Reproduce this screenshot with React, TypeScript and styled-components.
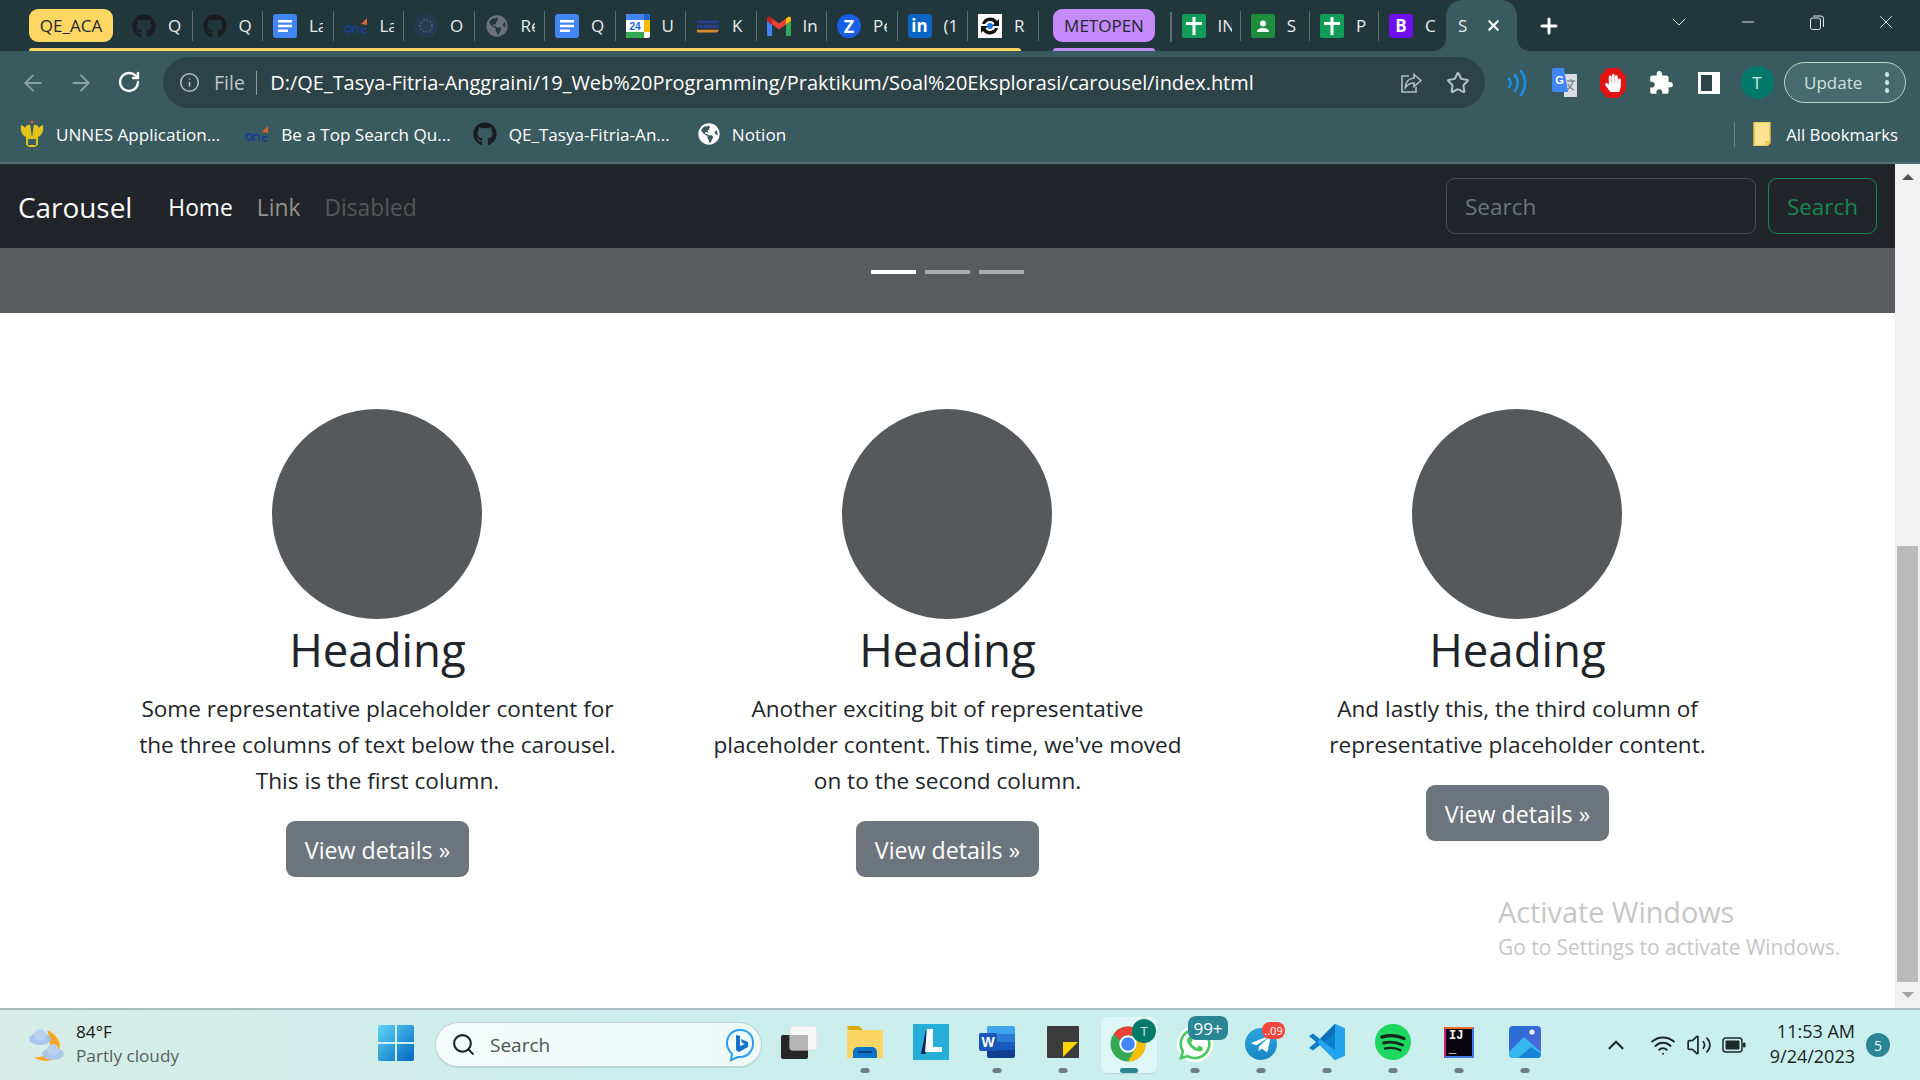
import React from "react";
import styled, { createGlobalStyle } from "styled-components";
import { FaGithub, FaGlobeAmericas, FaHandPaper, FaTelegramPlane, FaWhatsapp } from "react-icons/fa";
import { ArrowLeft, ArrowRight, ChevronDown, ChevronUp, Info, Minus, Plus, RotateCw, Search as SearchGlyph, Star, Volume2, Wifi, X } from "lucide-react";

const FONT = `"Open Sans", "Noto Sans", sans-serif`;

const Global = createGlobalStyle`
  html, body { margin: 0; padding: 0; background: #fff; }
  body { font-family: ${FONT}; overflow: hidden; }
  * { box-sizing: border-box; }
`;

const Page = styled.div`
  width: 1920px;
  height: 1080px;
  display: flex;
  flex-direction: column;
  overflow: hidden;
`;

/* ---------- tab strip ---------- */
const TabStrip = styled.div`
  height: 51px;
  flex: none;
  background: #22373b;
  display: flex;
  padding-left: 29px;
  color: #fff;
`;
const Group = styled.div<{ $gap?: number }>`
  display: flex;
  flex-direction: column;
  margin-left: ${(p) => p.$gap ?? 0}px;
`;
const GroupRow = styled.div`
  height: 48px;
  display: flex;
  align-items: center;
  padding-top: 3px;
`;
const GroupLine = styled.div<{ $w: number; $c: string }>`
  height: 3px;
  width: ${(p) => p.$w}px;
  background: ${(p) => p.$c};
  border-radius: 3px 3px 0 0;
`;
const Chip = styled.div<{ $c: string; $w: number; $after: number }>`
  width: ${(p) => p.$w}px;
  height: 33px;
  flex: none;
  border-radius: 9px;
  background: ${(p) => p.$c};
  color: #22282c;
  font-size: 17px;
  display: flex;
  align-items: center;
  justify-content: center;
  margin-right: ${(p) => p.$after}px;
`;
const Tab = styled.div<{ $w: number; $last?: boolean }>`
  width: ${(p) => p.$w}px;
  height: 30px;
  flex: none;
  display: flex;
  align-items: center;
  padding-left: 10px;
  gap: 12px;
  border-right: ${(p) => (p.$last ? "none" : "1.5px solid #5b6f73")};
`;
const TabIcon = styled.span`
  width: 24px;
  height: 24px;
  flex: none;
  display: flex;
  align-items: center;
  justify-content: center;
`;
const TabLabel = styled.span`
  width: 14px;
  overflow: hidden;
  white-space: nowrap;
  font-size: 17px;
  color: #e8ecec;
`;
const LeadSep = styled.div`
  width: 1.5px;
  height: 30px;
  margin: 12px 0 0 15px;
  background: #5b6f73;
  flex: none;
`;
const SecondTabs = styled.div`
  display: flex;
  height: 48px;
  align-items: center;
  padding-top: 3px;
`;
const ActiveTab = styled.div`
  position: relative;
  width: 71px;
  height: 51px;
  flex: none;
  background: #395a5f;
  border-radius: 16px 16px 0 0;
  display: flex;
  align-items: center;
  padding-left: 12px;
  gap: 18px;
  font-size: 17px;
  color: #e8ecec;
  &::before,
  &::after {
    content: "";
    position: absolute;
    bottom: 0;
    width: 12px;
    height: 12px;
  }
  &::before {
    left: -12px;
    background: radial-gradient(circle at 0 0, #22373b 11.5px, #395a5f 12px);
  }
  &::after {
    right: -12px;
    background: radial-gradient(circle at 100% 0, #22373b 11.5px, #395a5f 12px);
  }
`;
const NewTab = styled.div`
  width: 64px;
  padding-left: 20px;
  display: flex;
  align-items: center;
`;
const WindowControls = styled.div`
  margin-left: auto;
  display: flex;
  height: 44px;
`;
const WindowButton = styled.div`
  width: 69px;
  display: flex;
  align-items: center;
  justify-content: center;
  color: #e4eaea;
`;

/* ---------- toolbar ---------- */
const Toolbar = styled.div`
  height: 57px;
  flex: none;
  background: #395a5f;
  padding-top: 6px;
  display: flex;
  align-items: center;
`;
const NavRow = styled.div`
  display: flex;
  padding-left: 9px;
  margin-right: 10px;
`;
const NavButton = styled.div<{ $dim?: boolean }>`
  width: 48px;
  display: flex;
  justify-content: center;
  color: ${(p) => (p.$dim ? "#8ba0a3" : "#ffffff")};
`;
const Omnibox = styled.div`
  width: 1322px;
  height: 51px;
  flex: none;
  border-radius: 26px;
  background: #2e4347;
  padding: 0 4px 0 16px;
  display: flex;
  align-items: center;
`;
const OmniFile = styled.span`
  font-size: 19.5px;
  color: #bdc8ca;
  margin-left: 14px;
`;
const OmniSep = styled.span`
  width: 1.5px;
  height: 24px;
  background: #8b9b9e;
  margin: 0 13px 0 11px;
`;
const OmniUrl = styled.span`
  font-size: 19.93px;
  color: #fff;
  white-space: nowrap;
`;
const OmniEnd = styled.div`
  margin-left: auto;
  display: flex;
`;
const OmniAction = styled.div`
  width: 47px;
  display: flex;
  justify-content: center;
  color: #b3bfc1;
`;
const Actions = styled.div`
  display: flex;
  margin-left: 8px;
`;
const ActionSlot = styled.div`
  width: 48px;
  height: 40px;
  display: flex;
  align-items: center;
  justify-content: center;
`;
const Avatar = styled.div<{ $size: number; $font: number }>`
  width: ${(p) => p.$size}px;
  height: ${(p) => p.$size}px;
  border-radius: 50%;
  background: #00796b;
  color: #cfe9e4;
  font-size: ${(p) => p.$font}px;
  display: flex;
  align-items: center;
  justify-content: center;
`;
const UpdateButton = styled.div`
  width: 122px;
  height: 41px;
  margin-left: 3px;
  border: 1.5px solid #bcd6c8;
  border-radius: 21px;
  background: #476a6e;
  display: flex;
  align-items: center;
  padding-left: 19px;
  color: #cfe3df;
  font-size: 17px;
`;
const Kebab = styled.div`
  margin-left: auto;
  margin-right: 16px;
  display: flex;
  flex-direction: column;
  gap: 3.5px;
`;
const KebabDot = styled.span`
  width: 4.5px;
  height: 4.5px;
  border-radius: 50%;
  background: #cfe3df;
`;

/* ---------- bookmarks ---------- */
const BookmarkBar = styled.div`
  height: 56px;
  flex: none;
  background: #395a5f;
  border-bottom: 2px solid #4f7277;
  display: flex;
  align-items: center;
  padding: 0 22px 2px 20px;
`;
const Bookmark = styled.div<{ $after: number }>`
  display: flex;
  align-items: center;
  gap: 12px;
  color: #fff;
  font-size: 17.1px;
  white-space: nowrap;
  margin-right: ${(p) => p.$after}px;
`;
const BookmarkEnd = styled.div`
  margin-left: auto;
  display: flex;
  align-items: center;
  gap: 15px;
  color: #fff;
  font-size: 16.8px;
`;
const BookmarkSep = styled.span`
  width: 1.5px;
  height: 25px;
  background: #68858a;
  margin-right: 3px;
`;

/* ---------- page ---------- */
const Viewport = styled.div`
  height: 844px;
  flex: none;
  display: flex;
`;
const Main = styled.div`
  position: relative;
  flex: 1;
  min-width: 0;
  display: flex;
  flex-direction: column;
  background: #fff;
`;
const Navbar = styled.nav`
  height: 84px;
  flex: none;
  background: #212529;
  display: flex;
  align-items: center;
  padding: 0 18px;
`;
const Brand = styled.a`
  font-size: 27.9px;
  color: #fff;
  margin-right: 36px;
  padding-top: 2px;
`;
const NavLink = styled.a<{ $tone: string }>`
  font-size: 22.8px;
  color: ${(p) => p.$tone};
  margin-right: 24px;
  padding-top: 2px;
`;
const SearchForm = styled.form`
  margin-left: auto;
  display: flex;
  gap: 12px;
`;
const SearchInput = styled.div`
  width: 310px;
  height: 56px;
  border: 1.5px solid #4b4f53;
  border-radius: 9px;
  padding-left: 18px;
  display: flex;
  align-items: center;
  color: #6c757d;
  font-size: 22.5px;
`;
const SearchButton = styled.div`
  width: 109px;
  height: 56px;
  border: 1.5px solid #198754;
  border-radius: 9px;
  display: flex;
  align-items: center;
  justify-content: center;
  color: #198754;
  font-size: 22.5px;
`;
const CarouselEnd = styled.div`
  height: 65px;
  flex: none;
  background: #595c5f;
  display: flex;
  justify-content: center;
  gap: 9px;
  padding-top: 22px;
`;
const Indicator = styled.span<{ $on?: boolean }>`
  width: 45px;
  height: 4px;
  background: ${(p) => (p.$on ? "#ffffff" : "#a9abad")};
`;
const Marketing = styled.div`
  width: 1710px;
  margin: 96px auto 0;
  display: grid;
  grid-template-columns: repeat(3, 570px);
  text-align: center;
  color: #212529;
`;
const Column = styled.div`
  display: flex;
  flex-direction: column;
  align-items: center;
`;
const Circle = styled.div`
  width: 210px;
  height: 210px;
  margin-right: 2px;
  border-radius: 50%;
  background: #55595c;
`;
const Heading = styled.h2`
  margin: 1px 0 13px;
  font-size: 45.6px;
  font-weight: 400;
  line-height: 58px;
`;
const Body = styled.p`
  margin: 0 0 22px;
  font-size: 22.6px;
  line-height: 36px;
  white-space: pre-line;
`;
const DetailButton = styled.a`
  width: 183px;
  height: 56px;
  border-radius: 9px;
  background: #6c757d;
  color: #fff;
  font-size: 23.2px;
  padding-top: 2px;
  display: flex;
  align-items: center;
  justify-content: center;
`;
const Activate = styled.div`
  position: absolute;
  left: 1498px;
  top: 729px;
  color: #c6c6c6;
  white-space: nowrap;
`;
const ActivateTitle = styled.div`
  font-size: 28.8px;
  line-height: 38px;
`;
const ActivateHint = styled.div`
  font-size: 20.9px;
  line-height: 32px;
`;
const Scrollbar = styled.div`
  width: 25px;
  flex: none;
  background: #f1f1f1;
  display: flex;
  flex-direction: column;
  align-items: center;
  justify-content: space-between;
  padding: 10px 0;
`;
const ScrollTrack = styled.div`
  flex: 1;
  width: 100%;
  display: flex;
  flex-direction: column;
  justify-content: flex-end;
  align-items: center;
  padding-bottom: 10px;
`;
const ScrollThumb = styled.div`
  width: 21px;
  height: 436px;
  background: #bababa;
`;
const ArrowUp = styled.span`
  width: 0;
  height: 0;
  border-left: 6px solid transparent;
  border-right: 6px solid transparent;
  border-bottom: 6px solid #505050;
`;
const ArrowDown = styled.span`
  width: 0;
  height: 0;
  border-left: 6px solid transparent;
  border-right: 6px solid transparent;
  border-top: 6px solid #a3a3a3;
`;

/* ---------- taskbar ---------- */
const Taskbar = styled.div`
  height: 72px;
  flex: none;
  border-top: 2px solid #a9bfbf;
  background: linear-gradient(90deg, #d7ece6 0%, #cbeeec 35%, #c9efee 100%);
  display: flex;
  align-items: center;
`;
const Weather = styled.div`
  width: 378px;
  flex: none;
  padding-left: 27px;
  display: flex;
  align-items: center;
  gap: 11px;
`;
const WeatherText = styled.div`
  display: flex;
  flex-direction: column;
  font-size: 17.2px;
  line-height: 24px;
  margin-bottom: 3px;
`;
const WeatherTemp = styled.span`
  color: #1a1a1a;
`;
const WeatherState = styled.span`
  color: #55605f;
`;
const StartButton = styled.div`
  width: 57px;
  flex: none;
`;
const SearchPill = styled.div`
  width: 327px;
  height: 46px;
  flex: none;
  border-radius: 23px;
  border: 1.5px solid #bcd6d4;
  border-bottom-width: 2.5px;
  background: linear-gradient(90deg, #f4fbfa, #ecf9f7);
  display: flex;
  align-items: center;
  padding: 0 6px 0 15px;
  gap: 14px;
  color: #4b5452;
  font-size: 19px;
`;
const PillEnd = styled.span`
  margin-left: auto;
  display: flex;
`;
const Slots = styled.div`
  display: flex;
  margin-left: 4px;
`;
const Slot = styled.div<{ $active?: boolean }>`
  position: relative;
  width: 66px;
  height: 56px;
  flex: none;
  display: flex;
  align-items: center;
  justify-content: center;
  padding-bottom: 6px;
  &::before {
    content: "";
    display: ${(p) => (p.$active ? "block" : "none")};
    position: absolute;
    inset: 0 5px;
    border-radius: 6px;
    background: #dff6f6;
    box-shadow: 0 1px 1px #b9d8d8;
  }
`;
const SlotContent = styled.span`
  position: relative;
  display: flex;
`;
const Dot = styled.span<{ $active?: boolean }>`
  position: absolute;
  bottom: 0;
  left: 50%;
  transform: translateX(-50%);
  width: ${(p) => (p.$active ? 18 : 9)}px;
  height: 5px;
  border-radius: 3px;
  background: ${(p) => (p.$active ? "#2a8595" : "#6d7f80")};
`;
const Badge = styled.span<{ $bg: string; $w: number; $r: number; $t: number; $h: number; $fs: number }>`
  position: absolute;
  right: ${(p) => p.$r}px;
  top: ${(p) => p.$t}px;
  width: ${(p) => p.$w}px;
  height: ${(p) => p.$h}px;
  border-radius: 8px;
  background: ${(p) => p.$bg};
  color: #fff;
  font-size: ${(p) => p.$fs}px;
  display: flex;
  align-items: center;
  justify-content: center;
`;
const AvatarBadge = styled.span`
  position: absolute;
  top: -3px;
  right: -5px;
`;
const IdeBox = styled.span`
  width: 30px;
  height: 31px;
  background: #0b0510;
  border: 2px solid #3a78e6;
  border-left-color: #d81b78;
  border-top-color: #ef6c2a;
  color: #fff;
  font: 700 12px "Liberation Mono", monospace;
  padding: 1px 0 0 3px;
  display: block;
  line-height: 13px;
`;
const Tray = styled.div`
  margin-left: 38px;
  width: 40px;
  display: flex;
  justify-content: center;
  color: #1d2a2a;
`;
const TrayIcons = styled.div`
  display: flex;
  align-items: center;
  gap: 10px;
  margin-left: 14px;
  color: #1d2a2a;
`;
const Clock = styled.div`
  width: 109px;
  text-align: right;
  font-size: 18px;
  line-height: 25px;
  color: #1a1f1f;
  margin-bottom: 3px;
`;
const Notice = styled.div`
  width: 24px;
  height: 24px;
  margin-left: 11px;
  border-radius: 50%;
  background: #2a8595;
  color: #fff;
  font-size: 14px;
  display: flex;
  align-items: center;
  justify-content: center;
`;
const MiniSquare = styled.span<{ $bg: string; $c: string; $fs: number }>`
  width: 24px;
  height: 24px;
  border-radius: 4px;
  background: ${(p) => p.$bg};
  color: ${(p) => p.$c};
  font-size: ${(p) => p.$fs}px;
  font-weight: 700;
  display: flex;
  align-items: center;
  justify-content: center;
`;
const ZoomDisc = styled(MiniSquare)`
  border-radius: 50%;
`;

/* ---------- icons ---------- */
const Docs = () => (
  <svg width="24" height="24" viewBox="0 0 24 24">
    <rect width="24" height="24" rx="3" fill="#4285f4" />
    <path d="M5 6h14v2.6H5zM5 10.7h14v2.6H5zM5 15.4h10v2.6H5z" fill="#fff" />
  </svg>
);
const Cross = () => (
  <svg width="24" height="24" viewBox="0 0 24 24">
    <rect width="24" height="24" rx="2" fill="#0f9d58" />
    <path d="M10.500 3h3v5H20v3h-6.500v10h-3V11H4V8h6.500z" fill="#fff" />
  </svg>
);
const Classroom = () => (
  <svg width="24" height="24" viewBox="0 0 24 24">
    <rect width="24" height="24" rx="2" fill="#1e8e3e" />
    <circle cx="12" cy="9.500" r="3" fill="#fff" />
    <path d="M6 18c0-3 3-4 6-4s6 1 6 4z" fill="#fff" />
  </svg>
);
const OneLogo = () => (
  <svg width="24" height="20" viewBox="0 0 24 20">
    <circle cx="4" cy="13" r="3" stroke="#1c3f8f" strokeWidth="1.800" fill="none" />
    <path d="M9 17v-7M9 12c1-2 5-2 5 1v4" stroke="#1c3f8f" strokeWidth="1.800" fill="none" />
    <path d="M17 13h5M17 13c0 4 4 5 5 3" stroke="#1c3f8f" strokeWidth="1.800" fill="none" />
    <path d="M17 8l6-6v7z" fill="#e0622a" />
  </svg>
);
const DarkSeal = () => (
  <svg width="24" height="24" viewBox="0 0 24 24">
    <circle cx="12" cy="12" r="12" fill="#26394f" />
    <circle cx="12" cy="12" r="6" fill="none" stroke="#3f5572" strokeWidth="2" strokeDasharray="2 1.500" />
  </svg>
);
const Calendar = () => (
  <svg width="24" height="24" viewBox="0 0 24 24">
    <rect width="24" height="24" rx="2" fill="#fff" />
    <path d="M0 18h18v6H2a2 2 0 0 1-2-2z" fill="#34a853" />
    <path d="M18 6h6v12h-6z" fill="#fbbc04" />
    <path d="M18 0h4a2 2 0 0 1 2 2v4h-6z" fill="#1967d2" />
    <path d="M2 0h16v6H0V2a2 2 0 0 1 2-2z" fill="#4285f4" />
    <text x="9" y="16" fontSize="10" fontWeight="700" textAnchor="middle" fill="#1967d2" fontFamily="Liberation Sans">24</text>
  </svg>
);
const KampusLogo = () => (
  <svg width="26" height="18" viewBox="0 0 26 18">
    <path d="M1 3h24v3H1zM1 8h24v3H1z" fill="#2a3f8f" />
    <path d="M1 13h24l-2 3H1z" fill="#d98a2c" />
  </svg>
);
const Gmail = () => (
  <svg width="24" height="20" viewBox="0 0 24 20">
    <path d="M1.600 20A1.600 1.600 0 0 1 0 18.400V5l5 3.500V20z" fill="#4285f4" />
    <path d="M19 20V8.500L24 5v13.400a1.600 1.600 0 0 1-1.600 1.600z" fill="#34a853" />
    <path d="M19 2.500V8.500L12 13.500 5 8.500V2.500l7 5z" fill="#ea4335" />
    <path d="M0 2.500V5l5 3.500V2.500L3 1C1.600 0 0 1 0 2.500z" fill="#c5221f" />
    <path d="M24 2.500V5l-5 3.500V2.500L21 1c1.400-1 3 0 3 1.500z" fill="#fbbc04" />
  </svg>
);
const SyncBadge = () => (
  <svg width="24" height="24" viewBox="0 0 24 24">
    <rect width="24" height="24" fill="#fff" />
    <path d="M4 10a8.500 8.500 0 0 1 15-3l2-2v7h-7l2.500-2.500A5.500 5.500 0 0 0 7 10z" fill="#111" />
    <path d="M20 14a8.500 8.500 0 0 1-15 3l-2 2v-7h7l-2.500 2.500A5.500 5.500 0 0 0 17 14z" fill="#111" />
    <circle cx="12" cy="12" r="3" fill="#1a73e8" />
  </svg>
);
const ShareIcon = () => (
  <svg width="24" height="24" viewBox="0 0 24 24" fill="none" stroke="currentColor" strokeWidth="1.600">
    <path d="M10 5H3v16h14v-5" />
    <path d="M15 3.500l7 6-7 6V12c-4 0-6.500 1.500-8.500 4.500 0-5 3-9 8.500-9.500z" />
  </svg>
);
const NearbyIcon = () => (
  <svg width="20" height="28" viewBox="0 0 20 28" fill="none" stroke="#1a8fe8" strokeLinecap="round">
    <path d="M2 10c2 2.500 2 5.500 0 8" strokeWidth="2.600" />
    <path d="M8 6c3.500 5 3.500 11 0 16" strokeWidth="2.600" />
    <path d="M14 2c5.500 7 5.500 17 0 24" strokeWidth="2.800" />
  </svg>
);
const TranslateIcon = () => (
  <svg width="26" height="30" viewBox="0 0 26 30">
    <path d="M12 6h12a1 1 0 0 1 1 1v21a1 1 0 0 1-1 1H12z" fill="#dadce0" />
    <path d="M15 13h8M19 11v2M21 13c-1 4-3 7-6 9M16 16c1 3 4 5 6 6" stroke="#7f8689" strokeWidth="1.300" fill="none" />
    <path d="M2 0h10l4 24H2a2 2 0 0 1-2-2V2a2 2 0 0 1 2-2z" fill="#4285f4" />
    <text x="7.500" y="16" fontSize="11" fontWeight="700" fill="#fff" textAnchor="middle" fontFamily="Liberation Sans">G</text>
  </svg>
);
const StopWrap = styled.span`
  position: relative;
  display: flex;
`;
const StopHand = styled.span`
  position: absolute;
  inset: 0;
  display: flex;
  align-items: center;
  justify-content: center;
`;
const StopIcon = () => (
  <StopWrap>
    <svg width="26" height="30" viewBox="0 0 26 30">
      <path d="M7.500 0h11L26 8v14l-7.500 8h-11L0 22V8z" fill="#e21313" />
    </svg>
    <StopHand>
      <FaHandPaper size={18} color="#fff" />
    </StopHand>
  </StopWrap>
);
const PuzzleIcon = () => (
  <svg width="26" height="26" viewBox="0 0 24 24">
    <path d="M20.500 11H19V7c0-1.100-.9-2-2-2h-4V3.500C13 2.120 11.880 1 10.500 1S8 2.120 8 3.500V5H4c-1.100 0-1.990.9-1.990 2v3.800H3.500c1.490 0 2.700 1.210 2.700 2.700s-1.210 2.700-2.700 2.700H2V20c0 1.100.9 2 2 2h3.800v-1.500c0-1.490 1.210-2.700 2.700-2.700 1.490 0 2.700 1.210 2.700 2.700V22H17c1.100 0 2-.9 2-2v-4h1.500c1.380 0 2.500-1.120 2.500-2.500S21.880 11 20.500 11z" fill="#fff" />
  </svg>
);
const SideIcon = () => (
  <svg width="22" height="22" viewBox="0 0 22 22">
    <rect width="22" height="22" fill="#fff" />
    <rect x="3" y="3" width="11" height="16" fill="#2e4347" />
  </svg>
);
const UnnesIcon = () => (
  <svg width="24" height="28" viewBox="0 0 24 28">
    <path d="M12 27c-4 0-6-1-6-4V17C2 15 0 11 1 5c2 1 3 1 4 3 1-3 3-4 5-3 1 4 1 8 2 12 1-4 1-8 2-12 2-1 4 0 5 3 1-2 2-2 4-3 1 6-1 10-5 12v6c0 3-2 4-6 4z" fill="#e3c41a" />
    <path d="M8 19h8v6H8z" fill="#395a5f" />
    <circle cx="12" cy="2" r="1.600" fill="#e24a3b" />
  </svg>
);
const FolderMini = () => (
  <svg width="18" height="24" viewBox="0 0 18 24">
    <path d="M1 0h16v21l-3 3H1z" fill="#fde293" stroke="#e8c044" strokeWidth="1.500" />
    <path d="M13 24v-4h4" fill="none" stroke="#e8c044" strokeWidth="1.500" />
  </svg>
);
const WeatherIcon = () => (
  <svg width="38" height="36" viewBox="0 0 38 36">
    <path d="M20 3c11 5 16 14 11 24-4 8-16 9-24 3 9 1 15-3 16-11 0-6-1-11-3-16z" fill="#f5a623" />
    <ellipse cx="13" cy="12" rx="11" ry="6" fill="#a8c5ea" />
    <circle cx="13" cy="8" r="6" fill="#b9d2f0" />
    <ellipse cx="26" cy="27" rx="11" ry="6" fill="#a8c5ea" />
    <circle cx="26" cy="23" r="6" fill="#b9d2f0" />
  </svg>
);
const WinLogo = () => (
  <svg width="36" height="36" viewBox="0 0 36 36">
    <defs>
      <linearGradient id="wl" x1="0" y1="0" x2="1" y2="1">
        <stop offset="0" stopColor="#5fd4f6" />
        <stop offset="1" stopColor="#0067c0" />
      </linearGradient>
    </defs>
    <path d="M2 0h15v17H0V2a2 2 0 0 1 2-2zM19 0h15a2 2 0 0 1 2 2v15H19zM0 19h17v17H2a2 2 0 0 1-2-2zM19 19h17v15a2 2 0 0 1-2 2H19z" fill="url(#wl)" />
  </svg>
);
const BingIcon = () => (
  <svg width="30" height="34" viewBox="0 0 30 34" fill="none">
    <path d="M15 2C7 2 2 8 2 15c0 5 2 8 5 11l-1 6 7-3c1 0 1 0 2 0 8 0 13-6 13-14S23 2 15 2z" stroke="#2a9df0" strokeWidth="2" fill="#eefbfb" />
    <path d="M11 7l4 1v10l5-2-3-1-1-4 7 3v5l-9 5-3-2z" fill="#1272c9" />
  </svg>
);
const TaskViewIcon = () => (
  <svg width="36" height="33" viewBox="0 0 36 33">
    <rect x="0" y="9" width="27" height="24" rx="2" fill="#262626" />
    <rect x="9" y="0" width="27" height="24" rx="2" fill="#f7f7f7" stroke="#dcdcdc" />
    <rect x="9" y="9" width="18" height="15" rx="1" fill="#b5b5b5" />
  </svg>
);
const FolderIcon = () => (
  <svg width="36" height="32" viewBox="0 0 36 32">
    <path d="M0 2a2 2 0 0 1 2-2h10l4 4H2z" fill="#dba90e" />
    <path d="M0 4h34a2 2 0 0 1 2 2v26H0z" fill="#fcd565" />
    <path d="M6 32v-6a5 5 0 0 1 5-5h14a5 5 0 0 1 5 5v6z" fill="#0b72c9" />
    <rect x="11" y="25" width="14" height="2" fill="#063f7a" />
  </svg>
);
const LIcon = () => (
  <svg width="36" height="36" viewBox="0 0 36 36">
    <rect width="36" height="36" fill="#27aed8" />
    <path d="M13 5L8 30h4l2-3z" fill="#10265f" />
    <path d="M14 5h6v18h9v5H12z" fill="#fff" />
  </svg>
);
const WordIcon = () => (
  <svg width="36" height="32" viewBox="0 0 36 32">
    <path d="M10 0h24a2 2 0 0 1 2 2v6H8V2a2 2 0 0 1 2-2z" fill="#41a5ee" />
    <rect x="8" y="8" width="28" height="8" fill="#2b7cd3" />
    <rect x="8" y="16" width="28" height="8" fill="#185abd" />
    <path d="M8 24h28v6a2 2 0 0 1-2 2H10a2 2 0 0 1-2-2z" fill="#103f91" />
    <rect y="7" width="18" height="18" rx="2" fill="#1a56b8" />
    <text x="9" y="21" fontSize="14" fontWeight="700" textAnchor="middle" fill="#fff" fontFamily="Liberation Sans">W</text>
  </svg>
);
const StickyIcon = () => (
  <svg width="32" height="32" viewBox="0 0 32 32">
    <rect width="32" height="32" rx="1" fill="#3b3b3b" />
    <path d="M16 16h15L16 31z" fill="#ffd500" />
  </svg>
);
const ChromeIcon = () => (
  <svg width="44" height="40" viewBox="-3 0 44 40">
    <circle cx="18" cy="22" r="17.500" fill="#34a853" />
    <path d="M18 4.500a17.500 17.500 0 0 1 15.200 8.750H18a8.800 8.800 0 0 0-8 5L3.800 12A17.500 17.500 0 0 1 18 4.500z" fill="#ea4335" />
    <path d="M33.200 13.250A17.500 17.500 0 0 1 18 39.500l7.700-13.200a8.800 8.800 0 0 0 0-8z" fill="#fbbc04" />
    <circle cx="18" cy="22" r="8.700" fill="#fff" />
    <circle cx="18" cy="22" r="6.800" fill="#4285f4" />
  </svg>
);
const WaWrap = styled.span`
  width: 36px;
  height: 36px;
  border-radius: 50%;
  background: #fff;
  display: flex;
  margin-top: 4px;
`;
const WhatsappIcon = () => (
  <WaWrap>
    <FaWhatsapp size={36} color="#48c95f" />
  </WaWrap>
);
const TelegramDisc = styled.span`
  width: 32px;
  height: 32px;
  margin-top: 4px;
  border-radius: 50%;
  background: linear-gradient(#2aa4df, #1a86c4);
  display: flex;
  align-items: center;
  justify-content: center;
`;
const VsCode = () => (
  <svg width="36" height="36" viewBox="0 0 36 36">
    <path d="M26 0l10 4.500v27L26 36 11 21l-7 5.500L0 24l7-6-7-6 4-2.500 7 5.500z" fill="#0a7fc7" />
    <path d="M26 0l10 4.500v27L26 36V9.500L15 18l11 8.500V36L11 21l-2-3 2-3z" fill="#22a4ee" />
    <path d="M26 0v9.500L15 18 11 15z" fill="#0a6eb4" />
  </svg>
);
const SpotifyIcon = () => (
  <svg width="36" height="36" viewBox="0 0 36 36" fill="none" stroke="#14281c" strokeLinecap="round">
    <circle cx="18" cy="18" r="18" fill="#1ed760" stroke="none" />
    <path d="M7 13c7-2 15-2 22 1.500" strokeWidth="3.400" />
    <path d="M8.500 19c6-1.500 13-1 19 2" strokeWidth="2.900" />
    <path d="M10 24.500c5-1 11-.8 15.500 1.800" strokeWidth="2.400" />
  </svg>
);
const PhotosIcon = () => (
  <svg width="32" height="32" viewBox="0 0 32 32">
    <defs>
      <linearGradient id="ph" x1="0" y1="0" x2="1" y2="1">
        <stop offset="0" stopColor="#1f6fd6" />
        <stop offset="1" stopColor="#5b63d8" />
      </linearGradient>
    </defs>
    <rect width="32" height="32" rx="4" fill="url(#ph)" />
    <circle cx="23" cy="6" r="2.600" fill="#f2f2f2" />
    <path d="M0 26L15 11l17 15v2a4 4 0 0 1-4 4H4a4 4 0 0 1-4-4z" fill="#36b7ee" />
    <path d="M9 32l13-11 10 7v0a4 4 0 0 1-4 4z" fill="#1783d6" />
  </svg>
);
const BatteryIcon = () => (
  <svg width="24" height="16" viewBox="0 0 24 16">
    <rect x="1" y="1" width="19" height="14" rx="3" fill="none" stroke="#1d2a2a" strokeWidth="1.500" />
    <rect x="3.500" y="3.500" width="14" height="9" rx="1" fill="#1d2a2a" />
    <rect x="21" y="5.500" width="2.500" height="5" rx="1" fill="#1d2a2a" />
  </svg>
);
const RestoreIcon = () => (
  <svg width="14" height="15" viewBox="0 0 14 15" fill="none" stroke="#e4eaea">
    <rect x="0.500" y="3" width="10" height="11.500" rx="2" />
    <path d="M3 1h8a2.500 2.500 0 0 1 2.500 2.500V12" />
  </svg>
);

const GH = () => <FaGithub size={24} color="#191d1f" />;
const firstTabs: [React.ReactNode, string][] = [
  [<GH />, "Q"],
  [<GH />, "Q"],
  [<Docs />, "La"],
  [<OneLogo />, "La"],
  [<DarkSeal />, "O"],
  [<FaGlobeAmericas size={22} color="#6a7478" />, "Re"],
  [<Docs />, "Q"],
  [<Calendar />, "U"],
  [<KampusLogo />, "K"],
  [<Gmail />, "In"],
  [<ZoomDisc $bg="#1a5fe8" $c="#fff" $fs={18}>Z</ZoomDisc>, "Pe"],
  [<MiniSquare $bg="#0a66c2" $c="#fff" $fs={17}>in</MiniSquare>, "(1"],
  [<SyncBadge />, "R"],
];
const secondTabs: [React.ReactNode, string, boolean?][] = [
  [<Cross />, "IN"],
  [<Classroom />, "S"],
  [<Cross />, "P"],
  [<MiniSquare $bg="#6f0ff0" $c="#fff" $fs={17}>B</MiniSquare>, "C", true],
];

const columns = [
  "Some representative placeholder content for\nthe three columns of text below the carousel.\nThis is the first column.",
  "Another exciting bit of representative\nplaceholder content. This time, we've moved\non to the second column.",
  "And lastly this, the third column of\nrepresentative placeholder content.",
];

const apps: { icon: React.ReactNode; dot?: boolean; active?: boolean }[] = [
  { icon: <TaskViewIcon /> },
  { icon: <FolderIcon />, dot: true },
  { icon: <LIcon /> },
  { icon: <WordIcon />, dot: true },
  { icon: <StickyIcon />, dot: true },
  {
    icon: (
      <>
        <ChromeIcon />
        <AvatarBadge>
          <Avatar $size={24} $font={13}>T</Avatar>
        </AvatarBadge>
      </>
    ),
    dot: true,
    active: true,
  },
  {
    icon: (
      <>
        <WhatsappIcon />
        <Badge $bg="#2a8595" $w={40} $h={24} $r={-15} $t={-6} $fs={17}>99+</Badge>
      </>
    ),
    dot: true,
  },
  {
    icon: (
      <>
        <TelegramDisc>
          <FaTelegramPlane size={22} color="#fff" />
        </TelegramDisc>
        <Badge $bg="#f0463c" $w={23} $h={17} $r={-8} $t={-2} $fs={11}>..09</Badge>
      </>
    ),
    dot: true,
  },
  { icon: <VsCode />, dot: true },
  { icon: <SpotifyIcon />, dot: true },
  { icon: <IdeBox>IJ<br />_</IdeBox>, dot: true },
  { icon: <PhotosIcon />, dot: true },
];

export default function App() {
  return (
    <Page>
      <Global />
      <TabStrip>
        <Group>
          <GroupRow>
            <Chip $c="#fdd663" $w={84} $after={9}>QE_ACA</Chip>
            {firstTabs.map(([icon, label], i) => (
              <Tab key={i} $w={70.5}>
                <TabIcon>{icon}</TabIcon>
                <TabLabel>{label}</TabLabel>
              </Tab>
            ))}
          </GroupRow>
          <GroupLine $w={992} $c="#fdd663" />
        </Group>
        <Group $gap={14.5}>
          <GroupRow>
            <Chip $c="#c58af9" $w={102} $after={0}>METOPEN</Chip>
          </GroupRow>
          <GroupLine $w={102} $c="#c58af9" />
        </Group>
        <LeadSep />
        <SecondTabs>
          {secondTabs.map(([icon, label, last], i) => (
            <Tab key={i} $w={last ? 67 : 69.2} $last={last}>
              <TabIcon>{icon}</TabIcon>
              <TabLabel>{label}</TabLabel>
            </Tab>
          ))}
        </SecondTabs>
        <ActiveTab>
          S
          <X size={17} strokeWidth={3} color="#fff" />
        </ActiveTab>
        <NewTab>
          <Plus size={24} strokeWidth={3} color="#fff" />
        </NewTab>
        <WindowControls>
          <WindowButton><ChevronDown size={24} strokeWidth={1} /></WindowButton>
          <WindowButton><Minus size={20} strokeWidth={1.200} /></WindowButton>
          <WindowButton><RestoreIcon /></WindowButton>
          <WindowButton><X size={22} strokeWidth={1} /></WindowButton>
        </WindowControls>
      </TabStrip>

      <Toolbar>
        <NavRow>
          <NavButton $dim><ArrowLeft size={26} strokeWidth={1.800} /></NavButton>
          <NavButton $dim><ArrowRight size={26} strokeWidth={1.800} /></NavButton>
          <NavButton><RotateCw size={24} strokeWidth={2.400} /></NavButton>
        </NavRow>
        <Omnibox>
          <Info size={21} color="#b3bfc1" strokeWidth={1.800} />
          <OmniFile>File</OmniFile>
          <OmniSep />
          <OmniUrl>D:/QE_Tasya-Fitria-Anggraini/19_Web%20Programming/Praktikum/Soal%20Eksplorasi/carousel/index.html</OmniUrl>
          <OmniEnd>
            <OmniAction><ShareIcon /></OmniAction>
            <OmniAction><Star size={24} strokeWidth={2} /></OmniAction>
          </OmniEnd>
        </Omnibox>
        <Actions>
          <ActionSlot><NearbyIcon /></ActionSlot>
          <ActionSlot><TranslateIcon /></ActionSlot>
          <ActionSlot><StopIcon /></ActionSlot>
          <ActionSlot><PuzzleIcon /></ActionSlot>
          <ActionSlot><SideIcon /></ActionSlot>
          <ActionSlot><Avatar $size={33} $font={17}>T</Avatar></ActionSlot>
        </Actions>
        <UpdateButton>
          Update
          <Kebab>
            <KebabDot />
            <KebabDot />
            <KebabDot />
          </Kebab>
        </UpdateButton>
      </Toolbar>

      <BookmarkBar>
        <Bookmark $after={25}><UnnesIcon />UNNES Application...</Bookmark>
        <Bookmark $after={22}><OneLogo />Be a Top Search Qu...</Bookmark>
        <Bookmark $after={28}><GH />QE_Tasya-Fitria-An...</Bookmark>
        <Bookmark $after={0}><FaGlobeAmericas size={22} color="#fff" />Notion</Bookmark>
        <BookmarkEnd>
          <BookmarkSep />
          <FolderMini />
          All Bookmarks
        </BookmarkEnd>
      </BookmarkBar>

      <Viewport>
        <Main>
          <Navbar>
            <Brand>Carousel</Brand>
            <NavLink $tone="#ffffff">Home</NavLink>
            <NavLink $tone="#90928f">Link</NavLink>
            <NavLink $tone="#55585b">Disabled</NavLink>
            <SearchForm>
              <SearchInput>Search</SearchInput>
              <SearchButton>Search</SearchButton>
            </SearchForm>
          </Navbar>
          <CarouselEnd>
            <Indicator $on />
            <Indicator />
            <Indicator />
          </CarouselEnd>
          <Marketing>
            {columns.map((text, i) => (
              <Column key={i}>
                <Circle />
                <Heading>Heading</Heading>
                <Body>{text}</Body>
                <DetailButton>View details »</DetailButton>
              </Column>
            ))}
          </Marketing>
          <Activate>
            <ActivateTitle>Activate Windows</ActivateTitle>
            <ActivateHint>Go to Settings to activate Windows.</ActivateHint>
          </Activate>
        </Main>
        <Scrollbar>
          <ArrowUp />
          <ScrollTrack>
            <ScrollThumb />
          </ScrollTrack>
          <ArrowDown />
        </Scrollbar>
      </Viewport>

      <Taskbar>
        <Weather>
          <WeatherIcon />
          <WeatherText>
            <WeatherTemp>84°F</WeatherTemp>
            <WeatherState>Partly cloudy</WeatherState>
          </WeatherText>
        </Weather>
        <StartButton><WinLogo /></StartButton>
        <SearchPill>
          <SearchGlyph size={25} strokeWidth={2} color="#1c2222" />
          Search
          <PillEnd><BingIcon /></PillEnd>
        </SearchPill>
        <Slots>
          {apps.map((app, i) => (
            <Slot key={i} $active={app.active}>
              <SlotContent>{app.icon}</SlotContent>
              {app.dot && <Dot $active={app.active} />}
            </Slot>
          ))}
        </Slots>
        <Tray><ChevronUp size={26} strokeWidth={2} /></Tray>
        <TrayIcons>
          <Wifi size={26} strokeWidth={1.800} />
          <Volume2 size={26} strokeWidth={1.600} />
          <BatteryIcon />
        </TrayIcons>
        <Clock>
          11:53 AM
          <br />
          9/24/2023
        </Clock>
        <Notice>5</Notice>
      </Taskbar>
    </Page>
  );
}
